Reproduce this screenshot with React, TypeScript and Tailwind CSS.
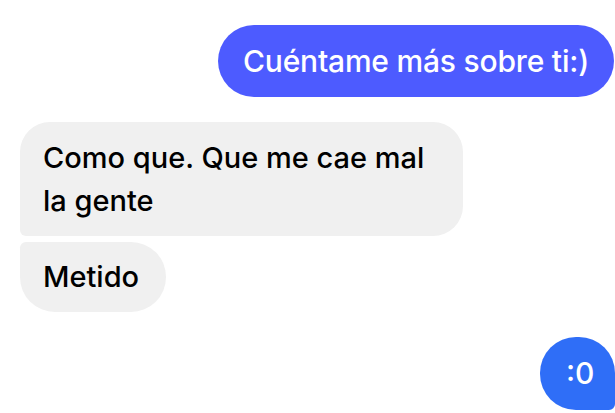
import React from 'react';

type Msg = { id: number; text: string; mine: boolean; shape: string; tone?: string };

const messages: Msg[] = [
  { id: 1, text: 'Cuéntame más sobre ti:)', mine: true, shape: 'rounded-full', tone: 'bg-[#4d5bff]' },
  { id: 2, text: 'Como que. Que me cae mal la gente', mine: false, shape: 'rounded-[30px] rounded-bl-[6px]' },
  { id: 3, text: 'Metido', mine: false, shape: 'rounded-[36px] rounded-tl-[6px]' },
  { id: 4, text: ':0', mine: true, shape: 'rounded-l-[36px] rounded-tr-[36px] rounded-br-[6px]', tone: 'bg-[#2f6ef7]' },
];

/**
 * Chat transcript, Messenger style
 */
const App: React.FC = () => {
  return (
    <div
      className="w-[615px] h-[413px] overflow-hidden bg-white flex flex-col"
      style={{ fontFamily: 'Inter, "Noto Sans", sans-serif' }}
    >
      {/* outgoing */}
      <div className="self-end mt-[25px] mr-[1px]">
        <div className={`${messages[0].shape} ${messages[0].tone} w-[396px] h-[72px] flex items-center justify-center text-white text-[30px] font-medium tracking-[-0.2px] whitespace-nowrap`}>
          {messages[0].text}
        </div>
      </div>

      {/* incoming group */}
      <div className="ml-[20px] mt-[25px] flex flex-col items-start gap-[6px]">
        <div className={`${messages[1].shape} bg-[#f0f0f0] w-[443px] pl-[23px] pr-[25px] pt-[14px] pb-[14px] text-black text-[29px] font-medium leading-[43px]`}>
          {messages[1].text}
        </div>
        <div className={`${messages[2].shape} bg-[#f0f0f0] w-[146px] h-[70px] px-[23px] flex items-center text-black text-[29px] font-medium`}>
          {messages[2].text}
        </div>
      </div>

      {/* outgoing */}
      <div className="self-end mt-[25px]">
        <div className={`${messages[3].shape} ${messages[3].tone} w-[75px] h-[73px] pl-[26px] flex items-center text-white text-[30px] font-medium`}>
          {messages[3].text}
        </div>
      </div>
    </div>
  );
};

export default App;
